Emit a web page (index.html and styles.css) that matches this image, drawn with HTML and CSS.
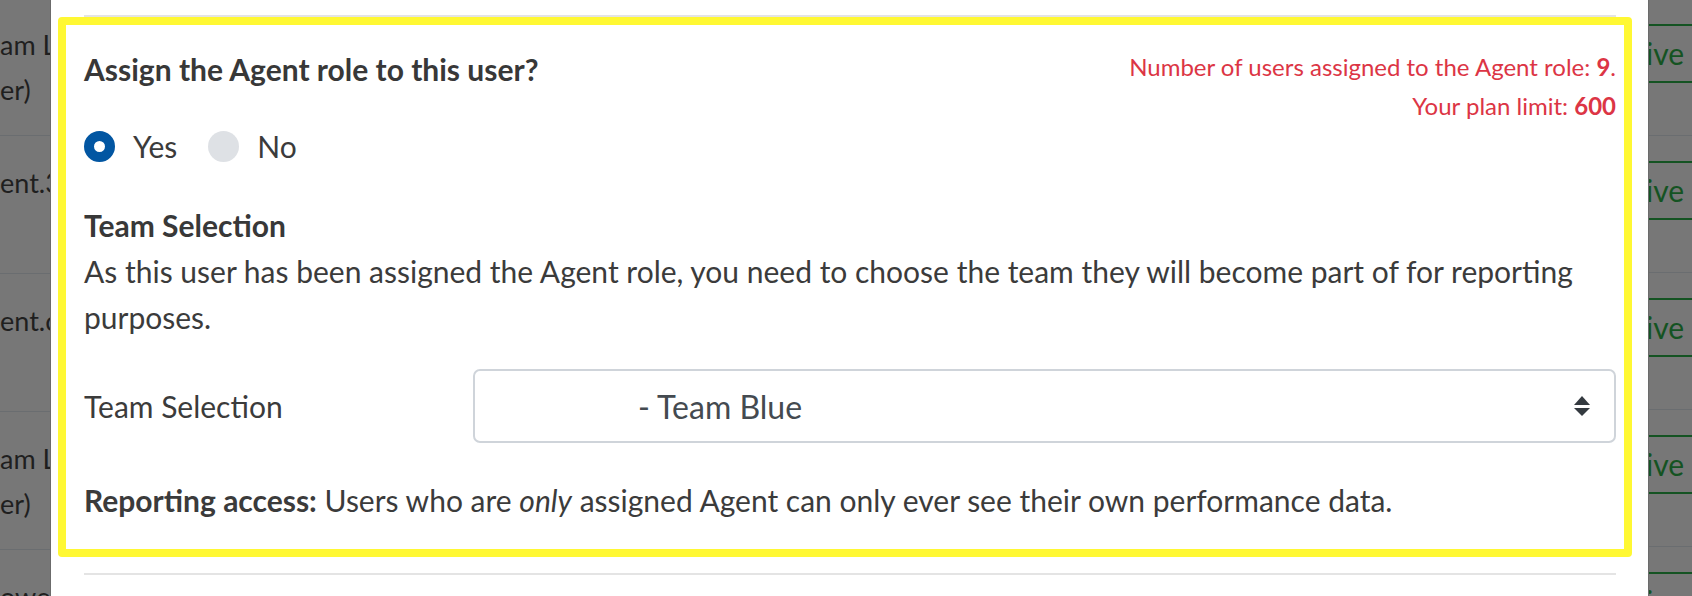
FILE: index.html
```html
<!DOCTYPE html>
<html lang="en">
<head>
<meta charset="utf-8">
<title>Assign role</title>
<link rel="stylesheet" href="styles.css">
</head>
<body>
<div class="page">
  <div class="side side-left">
    <div class="rows rows-left">
      <div class="trow"><div class="ttext">am Leader<br>er)</div></div>
      <div class="trow"><div class="ttext">ent.3@x<br>&nbsp;</div></div>
      <div class="trow"><div class="ttext">ent.c@x<br>&nbsp;</div></div>
      <div class="trow"><div class="ttext">am Leader<br>er)</div></div>
      <div class="trow"><div class="ttext">owe<br>&nbsp;</div></div>
    </div>
  </div>

  <div class="modal">
    <div class="sep sep-top"></div>
    <div class="highlight">
      <div class="header-row">
        <h3 class="question">Assign the Agent role to this user?</h3>
        <div class="limits">
          <div>Number of users assigned to the Agent role: <b>9</b>.</div>
          <div>Your plan limit: <b>600</b></div>
        </div>
      </div>
      <div class="radios">
        <div class="radio-option"><span class="radio radio-checked"></span><span>Yes</span></div>
        <div class="radio-option"><span class="radio"></span><span>No</span></div>
      </div>
      <h4 class="section-title">Team Selection</h4>
      <p class="para">As this user has been assigned the Agent role, you need to choose the team they will become part of for reporting purposes.</p>
      <div class="form-row">
        <div class="form-label">Team Selection</div>
        <div class="select">
          <span class="select-value">- Team Blue</span>
          <svg class="select-arrows" width="16" height="20" viewBox="0 0 16 20" aria-hidden="true">
            <polygon points="8,0 16,9 0,9" fill="#343a40"/>
            <polygon points="0,12 16,12 8,20" fill="#343a40"/>
          </svg>
        </div>
      </div>
      <p class="para reporting"><b>Reporting access:</b> Users who are <i>only</i> assigned Agent can only ever see their own performance data.</p>
    </div>
    <div class="sep sep-bottom"></div>
  </div>

  <div class="side side-right">
    <div class="rows rows-right">
      <div class="trow"><div class="badge">ive</div></div>
      <div class="trow"><div class="badge">ive</div></div>
      <div class="trow"><div class="badge">ive</div></div>
      <div class="trow"><div class="badge">ive</div></div>
      <div class="trow"><div class="badge">ive</div></div>
    </div>
  </div>
</div>
</body>
</html>
```
FILE: styles.css
```css
html, body {
  margin: 0;
  padding: 0;
}

body {
  font-family: Lato, "Open Sans", "Liberation Sans", sans-serif;
  background: #777777;
  color: #3b3b3b;
}

.page {
  display: flex;
  height: 596px;
  overflow: hidden;
}

/* background table behind the modal overlay */
.side {
  background: #777777;
  overflow: hidden;
  flex: none;
}

.side-left {
  width: 50px;
  border-right: 1px solid #6b6b6b;
}

.side-right {
  width: 43px;
  border-left: 1px solid #6b6b6b;
}

.rows-left {
  margin-top: -2px;
}

.rows-right {
  margin-top: -1px;
}

.trow {
  height: 137px;
  border-bottom: 1px solid #6a6d70;
  display: flex;
  flex-direction: column;
}

.rows-left .trow {
  justify-content: center;
}

.ttext {
  font-size: 27px;
  line-height: 45px;
  color: #1f1f1f;
  white-space: nowrap;
}

.rows-right .trow {
  padding-top: 25px;
  box-sizing: border-box;
}

.badge {
  height: 59px;
  box-sizing: border-box;
  border-top: 2px solid #145322;
  border-bottom: 2px solid #145322;
  margin-left: -3px;
  font-size: 30px;
  line-height: 55px;
  color: #145322;
  white-space: nowrap;
}

/* modal */
.modal {
  flex: 1;
  background: #ffffff;
  padding: 0 32px 0 33px;
  min-width: 0;
}

.sep {
  height: 2px;
  background: #e4e4e4;
}

.sep-top {
  margin-top: 15px;
}

.sep-bottom {
  margin-top: 16px;
}

.highlight {
  margin: 0 -16px 0 -26px;
  border: 8px solid #fff833;
  border-radius: 4px;
  padding: 22px 8px 26px 18px;
}

.header-row {
  display: flex;
  justify-content: space-between;
  align-items: flex-start;
}

.question {
  margin: 2px 0 0;
  font-size: 30px;
  font-weight: 700;
  line-height: 40px;
  color: #383838;
}

.limits {
  color: #dc3545;
  font-size: 24px;
  line-height: 39px;
  text-align: right;
}

.radios {
  margin-top: 1px;
  height: 40px;
  display: flex;
  align-items: center;
  gap: 31px;
  font-size: 30px;
}

.radio-option {
  display: flex;
  align-items: center;
  gap: 18px;
}

.radio {
  width: 31px;
  height: 31px;
  border-radius: 50%;
  background: #dee1e5;
  box-sizing: border-box;
  flex: none;
}

.radio-checked {
  background: #ffffff;
  border: 10px solid #0256a2;
}

.section-title {
  margin: 36px 0 0;
  font-size: 30px;
  font-weight: 700;
  line-height: 46px;
  color: #383838;
}

.para {
  margin: 0;
  font-size: 30px;
  line-height: 46px;
}

.form-row {
  margin-top: 29px;
  display: grid;
  grid-template-columns: 389px 1fr;
  align-items: center;
}

.form-label {
  font-size: 30px;
}

.select {
  height: 74px;
  box-sizing: border-box;
  border: 2px solid #cfd4da;
  border-radius: 7px;
  display: flex;
  align-items: center;
  justify-content: space-between;
  padding: 0 24px 0 163px;
  font-size: 32px;
  color: #444a50;
}

.select-arrows {
  display: block;
}

.reporting {
  margin-top: 34px;
}
```
